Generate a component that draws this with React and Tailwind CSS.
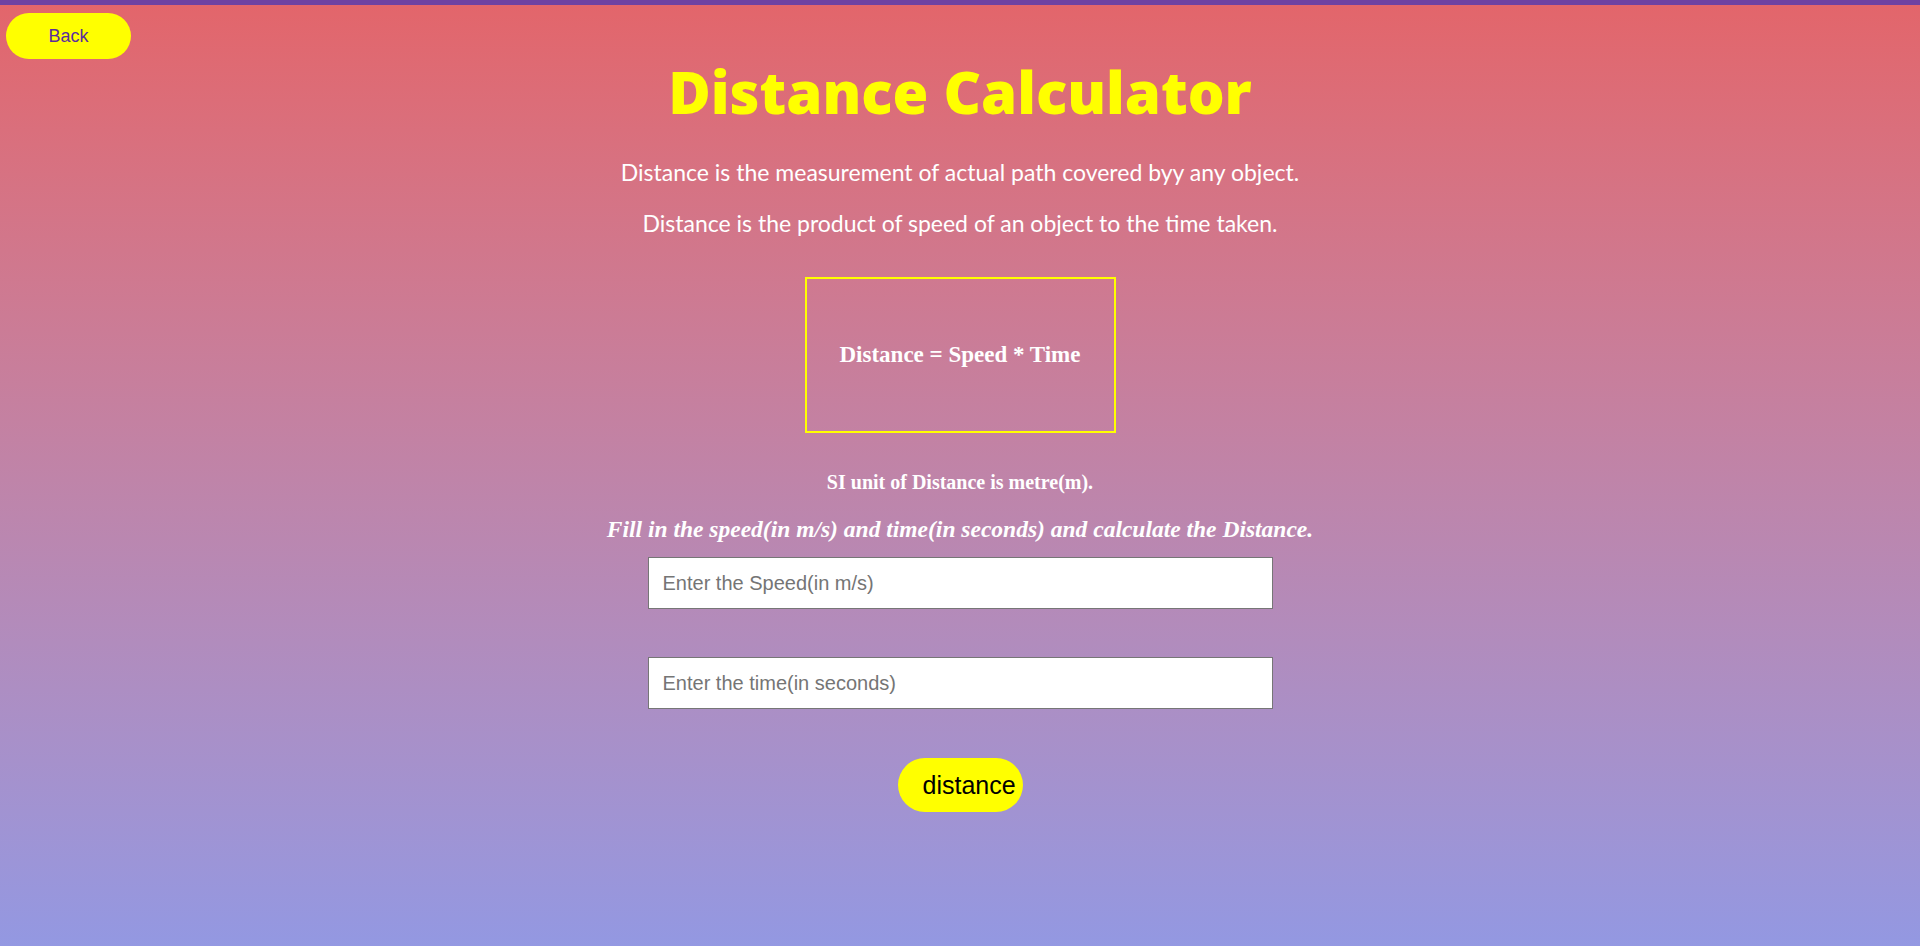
import React from 'react';

const App = () => {
  return (
    <div className="min-h-[946px] bg-linear-to-b from-[#e3656a] to-[#9398e2] font-['Liberation_Sans',Arial,sans-serif]">
      <div className="h-[5px] bg-[#6e42a2]" />
      <button className="ml-[6px] mt-[8px] w-[125px] h-[46px] rounded-full bg-[#ffff00] text-[#5b2d9e] text-[18px]">
        Back
      </button>

      <h1 className="text-center text-[#ffff00] text-[58px] font-extrabold leading-none mt-[4px] font-['Open_Sans',sans-serif]">
        Distance Calculator
      </h1>

      <p className="text-center text-white text-[23px] mt-[34px] font-['Lato',sans-serif]">
        Distance is the measurement of actual path covered byy any object.
      </p>
      <p className="text-center text-white text-[23px] mt-[16px] font-['Lato',sans-serif]">
        Distance is the product of speed of an object to the time taken.
      </p>

      <div className="mx-auto mt-[37px] w-[311px] h-[156px] border-2 border-[#ffff00] flex items-center justify-center">
        <h3 className="text-white text-[23px] font-bold font-['Liberation_Serif',serif]">
          Distance = Speed * Time
        </h3>
      </div>

      <p className="text-center text-white text-[20px] font-bold mt-[34px] font-['Liberation_Serif',serif]">
        SI unit of Distance is metre(m).
      </p>
      <p className="text-center text-white text-[23.5px] font-bold italic mt-[15px] font-['Liberation_Serif',serif]">
        Fill in the speed(in m/s) and time(in seconds) and calculate the Distance.
      </p>

      <div className="flex flex-col items-center">
        <input
          type="text"
          placeholder="Enter the Speed(in m/s)"
          className="mt-[10px] w-[625px] h-[52px] bg-white border border-[#767676] px-[14px] text-[20px] placeholder:text-[#757575] outline-none"
        />
        <input
          type="text"
          placeholder="Enter the time(in seconds)"
          className="mt-[48px] w-[625px] h-[52px] bg-white border border-[#767676] px-[14px] text-[20px] placeholder:text-[#757575] outline-none"
        />
        <button className="mt-[49px] w-[125px] h-[54px] rounded-[27px] bg-[#ffff00] text-black text-[25px] text-left pl-[25px]">
          distance
        </button>
      </div>
    </div>
  );
};

export default App;
